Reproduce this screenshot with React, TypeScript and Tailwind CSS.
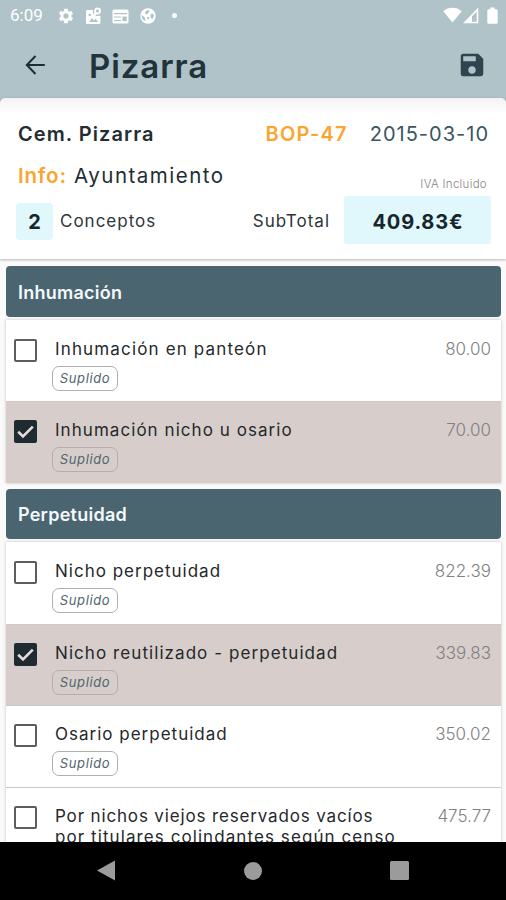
import { useState } from "react";
import { MdSave, MdSettings } from "react-icons/md";

type Concept = {
  id: number;
  lines: { text: string; track: string }[];
  tag?: string;
  price: string;
  checked: boolean;
};
type Section = { title: string; track: string; items: Concept[] };

const initialSections: Section[] = [
  {
    title: "Inhumación",
    track: "tracking-[0.25px]",
    items: [
      {
        id: 1,
        lines: [{ text: "Inhumación en panteón", track: "tracking-[1.150px]" }],
        tag: "Suplido",
        price: "80.00",
        checked: false,
      },
      {
        id: 2,
        lines: [{ text: "Inhumación nicho u osario", track: "tracking-[1.050px]" }],
        tag: "Suplido",
        price: "70.00",
        checked: true,
      },
    ],
  },
  {
    title: "Perpetuidad",
    track: "tracking-[0.25px]",
    items: [
      {
        id: 3,
        lines: [{ text: "Nicho perpetuidad", track: "tracking-[1px]" }],
        tag: "Suplido",
        price: "822.39",
        checked: false,
      },
      {
        id: 4,
        lines: [{ text: "Nicho reutilizado - perpetuidad", track: "tracking-[1.070px]" }],
        tag: "Suplido",
        price: "339.83",
        checked: true,
      },
      {
        id: 5,
        lines: [{ text: "Osario perpetuidad", track: "tracking-[1px]" }],
        tag: "Suplido",
        price: "350.02",
        checked: false,
      },
      {
        id: 6,
        lines: [
          { text: "Por nichos viejos reservados vacíos", track: "tracking-[0.850px]" },
          { text: "por titulares colindantes según censo", track: "tracking-[1.080px]" },
        ],
        price: "475.77",
        checked: false,
      },
    ],
  },
];

const StatusBar = () => (
  <div className="flex h-8 items-center pr-[8px] pl-[10px] text-white">
    <span className="w-[47px] font-[Roboto] text-[17px]">6:09</span>
    <MdSettings className="h-[18px] w-[18px]" />
    <svg className="-mt-[1px] ml-[10px] h-[18px] w-[17px]" viewBox="0 0 17 18">
      <path
        fill="currentColor"
        d="M2.300 3H8a4.500 4.500 0 0 0 3.500 6l3.900-.2v6.700a1.500 1.500 0 0 1-1.500 1.500h-11.600A1.300 1.300 0 0 1 1 15.700V4.300A1.300 1.300 0 0 1 2.300 3z"
      />
      <circle cx="12.500" cy="4" r="2.500" fill="none" stroke="currentColor" strokeWidth="1.800" />
      <path d="M11 6 8.500 9" stroke="currentColor" strokeWidth="2" />
      <path d="m4 15 3-4 2 2.500 1.600-2 2.600 3.500z" fill="#afc3c9" />
      <circle cx="4.800" cy="8" r="1.300" fill="#afc3c9" />
    </svg>
    <svg className="ml-[10px] h-[15px] w-[17px]" viewBox="0 0 17 15">
      <rect x="0.500" y="0.500" width="16" height="14" rx="1.500" fill="currentColor" />
      <path d="M2 4.600h13M2 8h7M2 11.500h7" stroke="#afc3c9" strokeWidth="1.200" />
      <rect x="10.500" y="7.500" width="4.200" height="4.600" fill="#afc3c9" />
    </svg>
    <svg className="ml-[11px] h-[16px] w-[16px]" viewBox="0 0 16 16">
      <circle cx="8" cy="8" r="7.700" fill="currentColor" />
      <path
        d="M1.800 7 5 9.500v2L6.500 13C3.500 12.800 1.200 10.500 1.800 7zM6 2.800 9.500 2 8.500 5 6.500 6.500 5 5zM10.500 6.500l2-1 1.600 2-1.600 3.500-2-1.500zM7.500 8.500l2 1-1 2-1.500-1z"
        fill="#afc3c9"
      />
    </svg>
    <span className="-mt-[2px] ml-[16px] h-[5px] w-[5px] rounded-full bg-white" />
    <div className="-mt-[2px] ml-auto flex items-center">
      <svg className="h-[16px] w-[19px]" viewBox="0 0 19 16" fill="currentColor">
        <path d="M9.500 15.500.3 4.300C3 1.800 6 .7 9.500.7s6.500 1.100 9.200 3.600z" />
      </svg>
      <svg className="ml-[1px] h-[17px] w-[16px]" viewBox="0 0 16 17">
        <path d="M14.500 2.500v13H2z" fill="none" stroke="currentColor" strokeWidth="1.600" />
        <path d="M9 8.500v7H2z" fill="currentColor" />
      </svg>
      <svg className="ml-[8px] h-[17px] w-[11px]" viewBox="0 0 11 17" fill="currentColor">
        <path d="M3.300.5h4.400v1.700h1.500a1.500 1.500 0 0 1 1.500 1.500v11.500a1.500 1.500 0 0 1-1.500 1.500H1.800a1.500 1.500 0 0 1-1.500-1.500V3.700a1.500 1.500 0 0 1 1.500-1.500h1.500z" />
      </svg>
    </div>
  </div>
);

const AppBar = () => (
  <header className="flex h-[66px] items-center pr-[19px] pl-[24px]">
    <button type="button" aria-label="Volver">
      <svg className="h-[22px] w-[22px]" viewBox="0 0 22 22" fill="none" stroke="#1f2d33" strokeWidth="2">
        <path d="M20.800 11H3M11.500 2 2.800 11l8.700 9" />
      </svg>
    </button>
    <h1 className="mt-[3px] ml-[43px] text-[33px] leading-none font-semibold tracking-[0.900px] text-[#22333b]">
      Pizarra
    </h1>
    <button type="button" aria-label="Guardar" className="ml-auto">
      <MdSave className="h-[30px] w-[30px] text-[#2f444e]" />
    </button>
  </header>
);

const Summary = ({ count }: { count: number }) => (
  <section
    className="relative h-[161px] rounded-t-[5px] bg-white bg-linear-to-b from-[#f5f2f2] to-white to-10%
      pr-[15px] pl-[16px] shadow-[0_1px_3px_rgba(0,0,0,0.28)]"
  >
    <div className="flex items-center pt-[22px] pr-[2px] pl-[2px] text-[20px] leading-[28px]">
      <span className="font-semibold tracking-[1.050px] text-[#222d32]">Cem. Pizarra</span>
      <span className="ml-auto font-semibold tracking-[1.200px] text-[#f9a631]">BOP-47</span>
      <span className="ml-[22px] tracking-[1px] text-[#3b5561]">2015-03-10</span>
    </div>
    <div className="flex h-[48px] items-end justify-between pr-[4px] pl-[2px]">
      <p className="pb-[6px] text-[20.500px] leading-[28px] tracking-[1.500px] text-[#222d32]">
        <span className="font-semibold tracking-[0.800px] text-[#f9a631]">Info:</span> Ayuntamiento
      </p>
      <span className="pb-[3px] text-[11.500px] leading-[18px] font-light tracking-[0.3px] text-[#858585]">
        IVA Incluido
      </span>
    </div>
    <div className="flex h-[48px] items-center text-[17px] text-[#2c3639]">
      <span
        className="mt-[2px] flex h-[37px] w-[37px] items-center justify-center rounded-[4px] bg-[#e0f7fb] pt-[1px]
          text-[20px] font-bold text-[#17262b]"
      >
        {count}
      </span>
      <span className="mt-[4px] ml-[7px] tracking-[1px]">Conceptos</span>
      <span className="mt-[4px] ml-auto tracking-[1px]">SubTotal</span>
      <span
        className="ml-[14px] flex h-[48px] w-[147px] items-center justify-center rounded-[3px] bg-[#e0f7fb] pt-[3px]
          pl-[1px] text-[20px] font-bold tracking-[0.850px] text-[#17262b]"
      >
        409.83€
      </span>
    </div>
  </section>
);

const ConceptRow = ({ item, onToggle }: { item: Concept; onToggle: () => void }) => (
  <li
    className={`flex h-[81.500px] shrink-0 border-t pt-[15px] pr-[10px] pl-[8px] first:border-t-0 first:pt-[16px] ${
      item.checked ? "border-[#d0c9c6] bg-[#d7cecb]" : "border-[#c9c9c9] bg-white"
    }`}
  >
    <button
      type="button"
      role="checkbox"
      aria-checked={item.checked}
      aria-label={item.lines.map((l) => l.text).join(" ")}
      onClick={onToggle}
      className={`mt-[3px] flex h-[23px] w-[23px] shrink-0 items-center justify-center rounded-[2px] border-2 ${
        item.checked ? "border-[#1e2c31] bg-[#1e2c31]" : "border-[#5d5d5d] bg-white"
      }`}
    >
      {item.checked && (
        <svg className="h-[17px] w-[17px] shrink-0" viewBox="0 0 17 17" fill="none" stroke="#e4dcda" strokeWidth="2.600">
          <path d="m1.200 8.800 4.800 4.700L15.800 3.700" />
        </svg>
      )}
    </button>
    <div className="ml-[18px] w-[350px] pt-[3px]">
      <p className="text-[17px] leading-[21px] text-[#25282a]">
        {item.lines.map((line) => (
          <span key={line.text} className={`block whitespace-nowrap ${line.track}`}>
            {line.text}
          </span>
        ))}
      </p>
      {item.tag && (
        <span
          className="mt-[6px] -ml-[3px] flex h-[25px] w-[66px] items-center justify-center rounded-[7px] border
            border-[#b5aeac] pt-[1px] text-[13px] tracking-[0.600px] text-[#52656d] italic"
        >
          {item.tag}
        </span>
      )}
    </div>
    <span className="ml-auto pt-[2px] text-[17px] leading-[23px] font-light text-[#808080]">{item.price}</span>
  </li>
);

const NavBar = () => (
  <nav className="flex h-[58.500px] shrink-0 items-center justify-between bg-black pr-[97px] pl-[97px]">
    <svg className="h-[21px] w-[18px]" viewBox="0 0 18 21" fill="#9b9b9b">
      <path d="M18 .5v20L0 10.500z" />
    </svg>
    <span className="h-[18px] w-[18px] rounded-full bg-[#9b9b9b]" />
    <span className="h-[19px] w-[19px] rounded-[1.500px] bg-[#9b9b9b]" />
  </nav>
);

export default function App() {
  const [sections, setSections] = useState(initialSections);

  const toggle = (id: number) =>
    setSections((prev) =>
      prev.map((s) => ({
        ...s,
        items: s.items.map((i) => (i.id === id ? { ...i, checked: !i.checked } : i)),
      })),
    );

  const count = sections.flatMap((s) => s.items).filter((i) => i.checked).length;

  return (
    <div className="flex h-[900px] w-[506px] flex-col overflow-hidden bg-[#afc3c9] font-[Inter,'Liberation_Sans',sans-serif]">
      <StatusBar />
      <AppBar />
      <Summary count={count} />
      <main className="min-h-0 flex-1 overflow-hidden bg-[#fafafa] pt-[7px] pr-[5px] pl-[6px]">
        {sections.map((section) => (
          <section key={section.title} className="mb-[6px]">
            <h2
              className={`flex h-[50.500px] items-center rounded-[4px] bg-[#4a6570] pt-[2px] pl-[12px] text-[18px]
                font-semibold text-[#f4f9fb] ${section.track}`}
            >
              {section.title}
            </h2>
            <ul className="mt-[3px] flex flex-col shadow-[0_0_3px_rgba(0,0,0,0.22)]">
              {section.items.map((item) => (
                <ConceptRow key={item.id} item={item} onToggle={() => toggle(item.id)} />
              ))}
            </ul>
          </section>
        ))}
      </main>
      <NavBar />
    </div>
  );
}
